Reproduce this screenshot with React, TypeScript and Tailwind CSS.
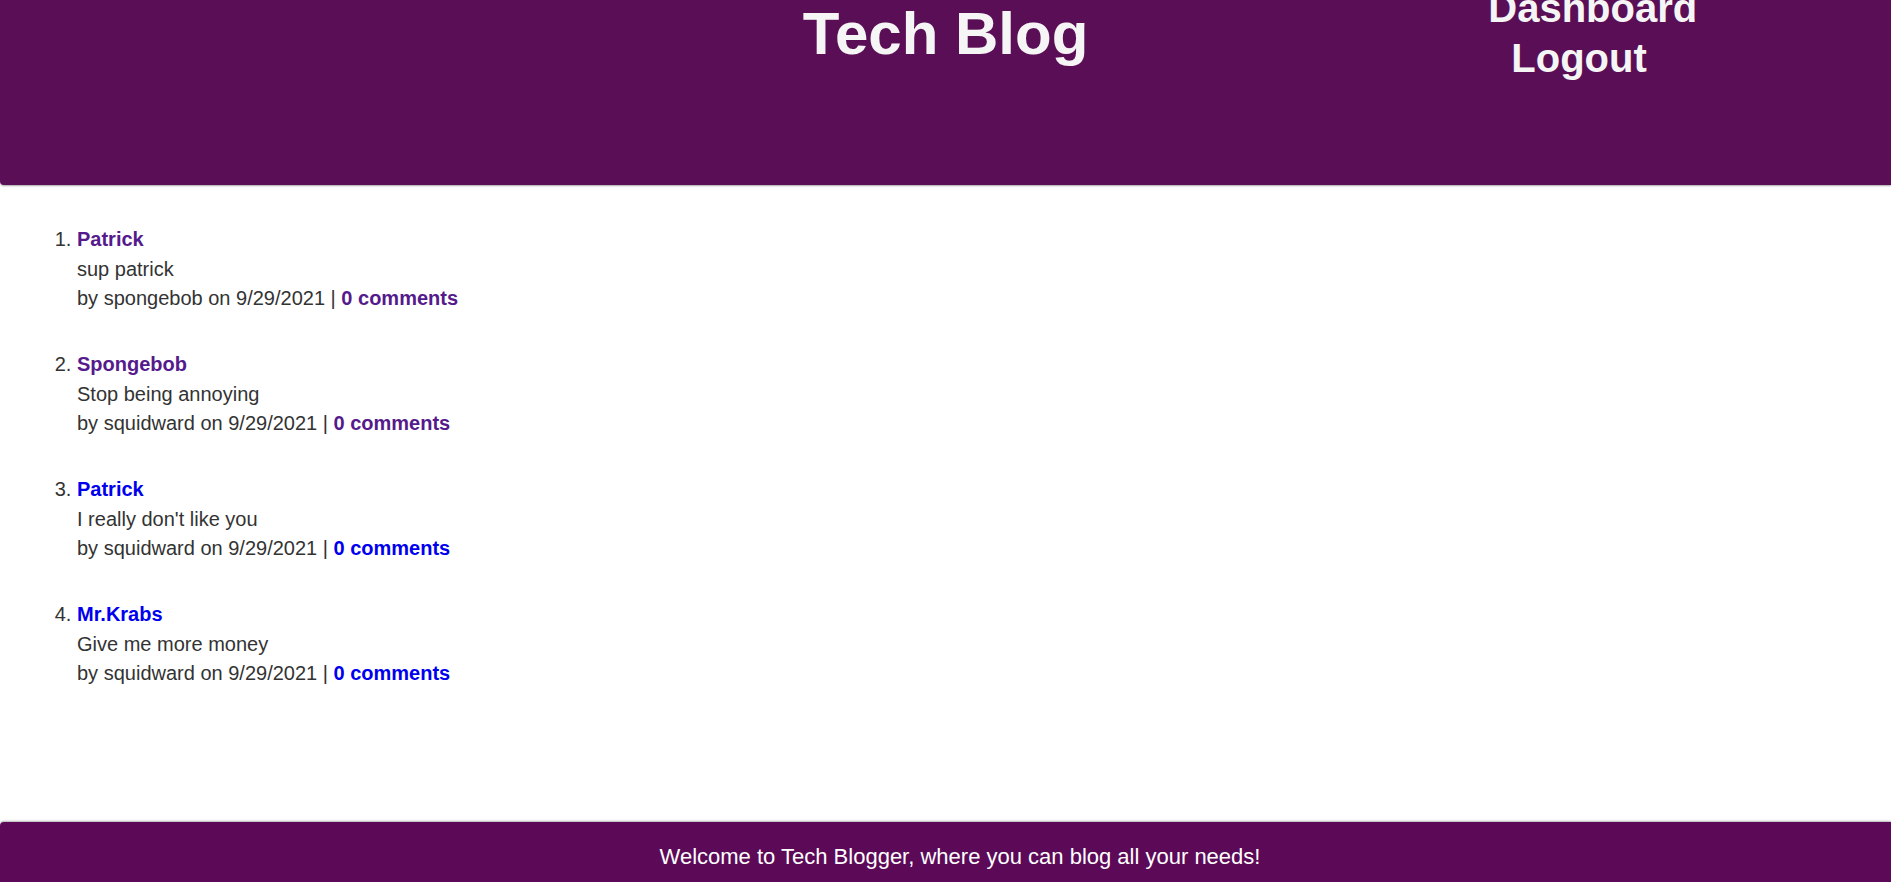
const posts = [
  { title: "Patrick", body: "sup patrick", author: "spongebob", visited: true },
  { title: "Spongebob", body: "Stop being annoying", author: "squidward", visited: true },
  { title: "Patrick", body: "I really don't like you", author: "squidward", visited: false },
  { title: "Mr.Krabs", body: "Give me more money", author: "squidward", visited: false },
];

export default function App() {
  return (
    <div className="font-['Liberation_Sans',Arial,sans-serif] text-[#333] bg-white overflow-hidden h-[882px]">
      <header className="bg-[#5a0e56] h-[185px] rounded-bl-[4px] shadow-[0_1px_2px_rgba(0,0,0,0.35)] grid grid-cols-[1fr_auto_1fr] text-[#f5f5f5]">
        <div />
        <h1 className="mt-[4px] text-[60px] leading-[60px] font-bold">Tech Blog</h1>
        <nav className="flex flex-col items-start pl-[400px] mt-[-17.5px] text-[40px] leading-[50px] font-bold">
          <a href="#">Dashboard</a>
          <a href="#" className="ml-[23px]">Logout</a>
        </nav>
      </header>

      <main className="h-[637px] pt-[40px]">
        <ol className="list-decimal pl-[77px] flex flex-col gap-[36.5px] text-[20px] leading-[29.5px]">
          {posts.map((p, i) => (
            <li key={i}>
              <a href="#" className={`font-bold ${p.visited ? "text-[#551a8b]" : "text-[#0000ee]"}`}>
                {p.title}
              </a>
              <p>{p.body}</p>
              <p>
                by {p.author} on 9/29/2021 |{" "}
                <a href="#" className={`font-bold ${p.visited ? "text-[#551a8b]" : "text-[#0000ee]"}`}>
                  0 comments
                </a>
              </p>
            </li>
          ))}
        </ol>
      </main>

      <footer className="bg-[#5c0a58] rounded-tl-[4px] shadow-[0_-1px_2px_rgba(0,0,0,0.3)] pt-[18px] pb-[20px] pl-[29px] text-center text-[22px] text-white">
        Welcome to Tech Blogger, where you can blog all your needs!
      </footer>
    </div>
  );
}
